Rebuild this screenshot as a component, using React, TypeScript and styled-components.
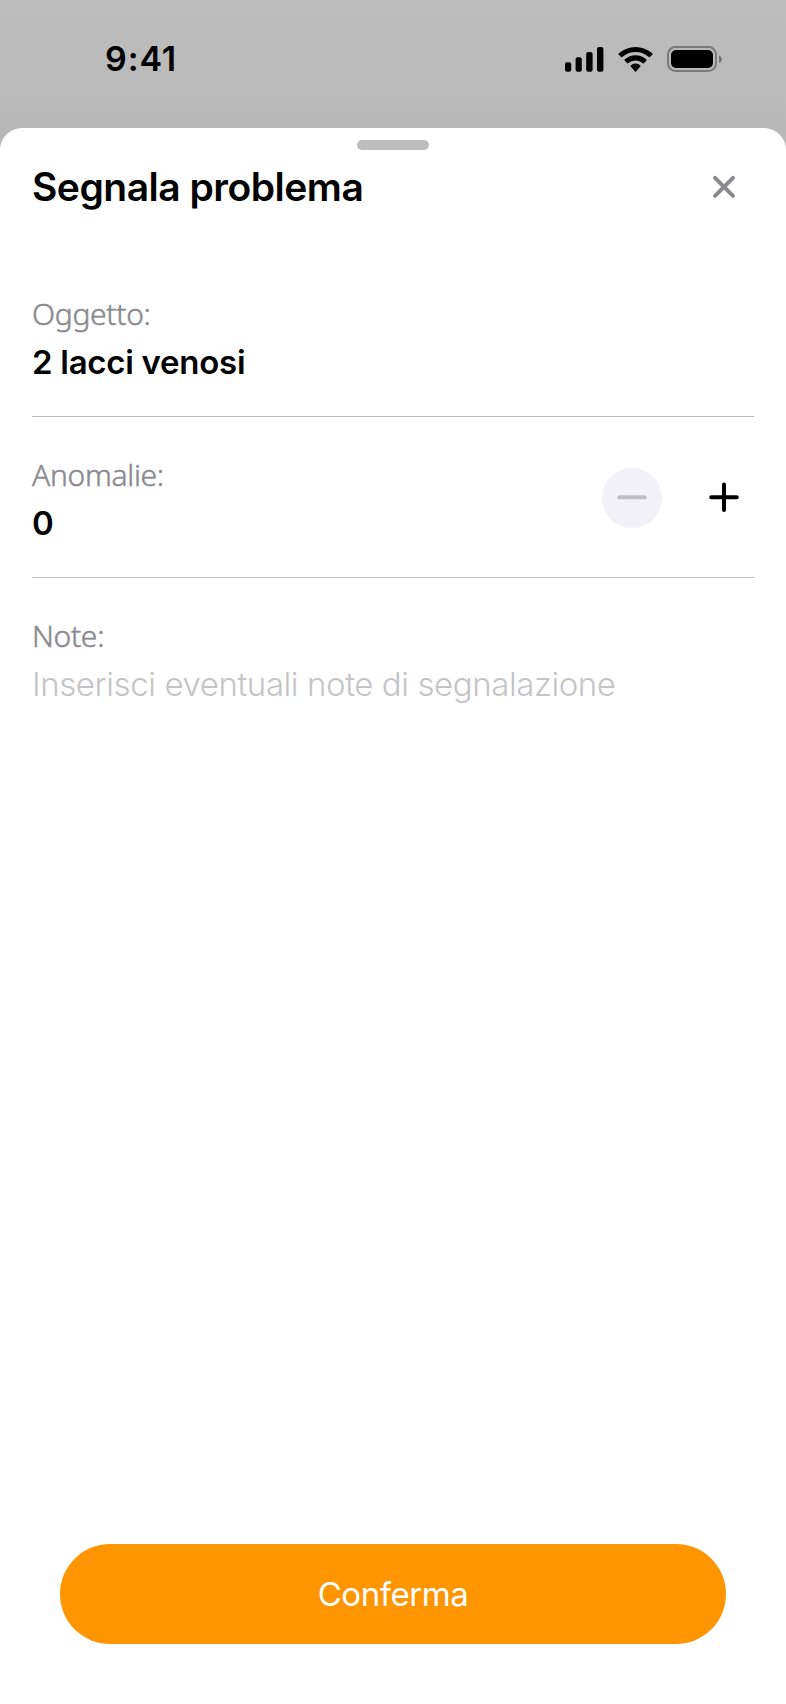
import React, { useState } from 'react';
import styled, { createGlobalStyle } from 'styled-components';

const GlobalStyle = createGlobalStyle`
  *, *::before, *::after { box-sizing: border-box; }
  body { margin: 0; background: #b9b9b9; font-family: Inter, 'Liberation Sans', sans-serif; color: #000; }
  button { border: 0; padding: 0; background: none; font: inherit; cursor: pointer; }
`;

const Screen = styled.div`
  display: flex;
  flex-direction: column;
  width: 786px;
  height: 1704px;
  background: linear-gradient(#bdbdbd 0, #b8b8b8 128px);
`;

const StatusBar = styled.header`
  display: flex;
  flex: none;
  justify-content: space-between;
  align-items: flex-start;
  height: 128px;
  padding: 46px 64px 0 105px;
`;

const Clock = styled.time`
  font-size: 34px;
  font-weight: 600;
  line-height: 25px;
  letter-spacing: 0.9px;
`;

const StatusIcons = styled.div`
  display: flex;
  align-items: flex-start;

  svg { display: block; }
  svg + svg { margin-left: 14px; }
`;

const Sheet = styled.main`
  display: flex;
  flex: 1;
  flex-direction: column;
  align-items: stretch;
  padding: 12px 32px 60px;
  border-radius: 22px 22px 0 0;
  background: #fff;
`;

const Grabber = styled.div`
  align-self: center;
  width: 72px;
  height: 10px;
  border-radius: 5px;
  background: #bdbdbd;
`;

const SheetHeader = styled.div`
  display: flex;
  justify-content: space-between;
  align-items: center;
  height: 48px;
  margin: 13px 0 45px;
`;

const Title = styled.h1`
  margin: 0;
  font-size: 39px;
  font-weight: 600;
  line-height: 48px;
  letter-spacing: -0.5px;
`;

const IconButton = styled.button<{ $filled?: boolean }>`
  display: block;
  width: 60px;
  height: 60px;
  border-radius: 50%;
  background: ${({ $filled }) => ($filled ? '#f2f1f7' : 'transparent')};

  svg { display: block; }
`;

const Field = styled.section<{ $divided?: boolean }>`
  display: flex;
  justify-content: space-between;
  height: 161px;
  padding-top: 37px;
  border-bottom: 1px solid ${({ $divided }) => ($divided ? '#c0c0c1' : 'transparent')};
`;

const FieldText = styled.div`
  display: flex;
  flex: 1;
  flex-direction: column;
  gap: 6px;
`;

const Label = styled.label`
  font-family: 'Noto Sans', sans-serif;
  font-size: 30px;
  font-weight: 300;
  line-height: 41px;
  letter-spacing: -0.3px;
  color: #8a8a8e;
  -webkit-text-stroke: 0.5px #8a8a8e;
`;

const Value = styled.div`
  font-size: 33px;
  font-weight: 600;
  line-height: 44px;
  letter-spacing: -0.28px;
`;

const NoteInput = styled.input`
  width: 100%;
  height: 44px;
  padding: 0;
  border: 0;
  outline: 0;
  background: none;
  font-family: inherit;
  font-size: 33px;
  font-weight: 300;
  line-height: 44px;
  letter-spacing: -0.42px;

  &::placeholder { color: #c4c4c6; opacity: 1; }
`;

const Stepper = styled.div`
  display: flex;
  gap: 32px;
  padding-top: 14px;
`;

const ConfirmButton = styled.button`
  height: 100px;
  margin: auto 28px 0;
  border-radius: 50px;
  background: #ff9500;
  color: #fff;
  font-size: 33px;
  font-weight: 400;
  line-height: 100px;
  letter-spacing: -0.45px;
`;

const SignalIcon = () => (
  <svg width="39" height="26" viewBox="0 0 39 26">
    <rect x="0" y="16.2" width="6.2" height="9.5" rx="2" />
    <rect x="10.6" y="11.2" width="6.2" height="14.5" rx="2" />
    <rect x="21.2" y="6" width="6.4" height="19.7" rx="2" />
    <rect x="32" y="1" width="6.4" height="24.7" rx="2" />
  </svg>
);

const WifiIcon = () => (
  <svg width="35" height="26" viewBox="-0.2 -0.5 17.5 13">
    <path d="M8.57 2.47c2.49 0 4.88.92 6.68 2.57.14.13.36.13.49 0l1.3-1.27a.35.35 0 0 0 0-.49C12.3-1.09 4.84-1.09.11 3.28a.35.35 0 0 0 0 .49l1.29 1.27c.14.13.35.13.49 0a9.88 9.88 0 0 1 6.68-2.57Zm0 4.22c1.35 0 2.66.51 3.67 1.43.14.13.35.13.48 0l1.29-1.32a.37.37 0 0 0 0-.52 7.92 7.92 0 0 0-10.88 0 .37.37 0 0 0 0 .52l1.29 1.32c.13.13.34.13.48 0a5.43 5.43 0 0 1 3.67-1.43Zm2.52 2.79a.4.4 0 0 1-.1.28l-2.18 2.46a.32.32 0 0 1-.48 0L6.15 9.76a.4.4 0 0 1 .01-.56 3.52 3.52 0 0 1 4.82 0c.07.07.11.17.11.28Z" />
  </svg>
);

const BatteryIcon = () => (
  <svg width="55" height="26" viewBox="0 0 55 26">
    <rect x="1" y="1" width="48" height="24" rx="7.5" fill="none" stroke="#000" strokeOpacity=".35" strokeWidth="2" />
    <rect x="4" y="4" width="42" height="18" rx="5" />
    <path d="M52 9.2v8c1.6-.7 2.7-2.3 2.7-4s-1.1-3.3-2.7-4Z" fillOpacity=".4" />
  </svg>
);

const CloseIcon = () => (
  <svg width="60" height="60" viewBox="0 0 60 60" fill="none" stroke="#8a8a8e" strokeWidth="4" strokeLinecap="round">
    <path d="M21 20.9 39 38.9M39 20.9 21 38.9" />
  </svg>
);

const MinusIcon = () => (
  <svg width="60" height="60" viewBox="0 0 60 60" fill="none" stroke="#bfbec3" strokeWidth="4" strokeLinecap="round">
    <path d="M17.2 29.3H42.8" />
  </svg>
);

const PlusIcon = () => (
  <svg width="60" height="60" viewBox="0 0 60 60" fill="none" stroke="#000" strokeWidth="4" strokeLinecap="round">
    <path d="M17.2 29.3H42.8M30 16.5V42.1" />
  </svg>
);

export default function App() {
  const [count, setCount] = useState(0);

  return (
    <>
      <GlobalStyle />
      <Screen>
        <StatusBar>
          <Clock>9:41</Clock>
          <StatusIcons>
            <SignalIcon />
            <WifiIcon />
            <BatteryIcon />
          </StatusIcons>
        </StatusBar>
        <Sheet>
          <Grabber />
          <SheetHeader>
            <Title>Segnala problema</Title>
            <IconButton aria-label="Chiudi">
              <CloseIcon />
            </IconButton>
          </SheetHeader>
          <Field $divided>
            <FieldText>
              <Label as="div">Oggetto:</Label>
              <Value>2 lacci venosi</Value>
            </FieldText>
          </Field>
          <Field $divided>
            <FieldText>
              <Label as="div">Anomalie:</Label>
              <Value>{count}</Value>
            </FieldText>
            <Stepper>
              <IconButton $filled aria-label="Diminuisci" onClick={() => setCount(Math.max(0, count - 1))}>
                <MinusIcon />
              </IconButton>
              <IconButton aria-label="Aumenta" onClick={() => setCount(count + 1)}>
                <PlusIcon />
              </IconButton>
            </Stepper>
          </Field>
          <Field>
            <FieldText>
              <Label htmlFor="note">Note:</Label>
              <NoteInput id="note" placeholder="Inserisci eventuali note di segnalazione" />
            </FieldText>
          </Field>
          <ConfirmButton>Conferma</ConfirmButton>
        </Sheet>
      </Screen>
    </>
  );
}
